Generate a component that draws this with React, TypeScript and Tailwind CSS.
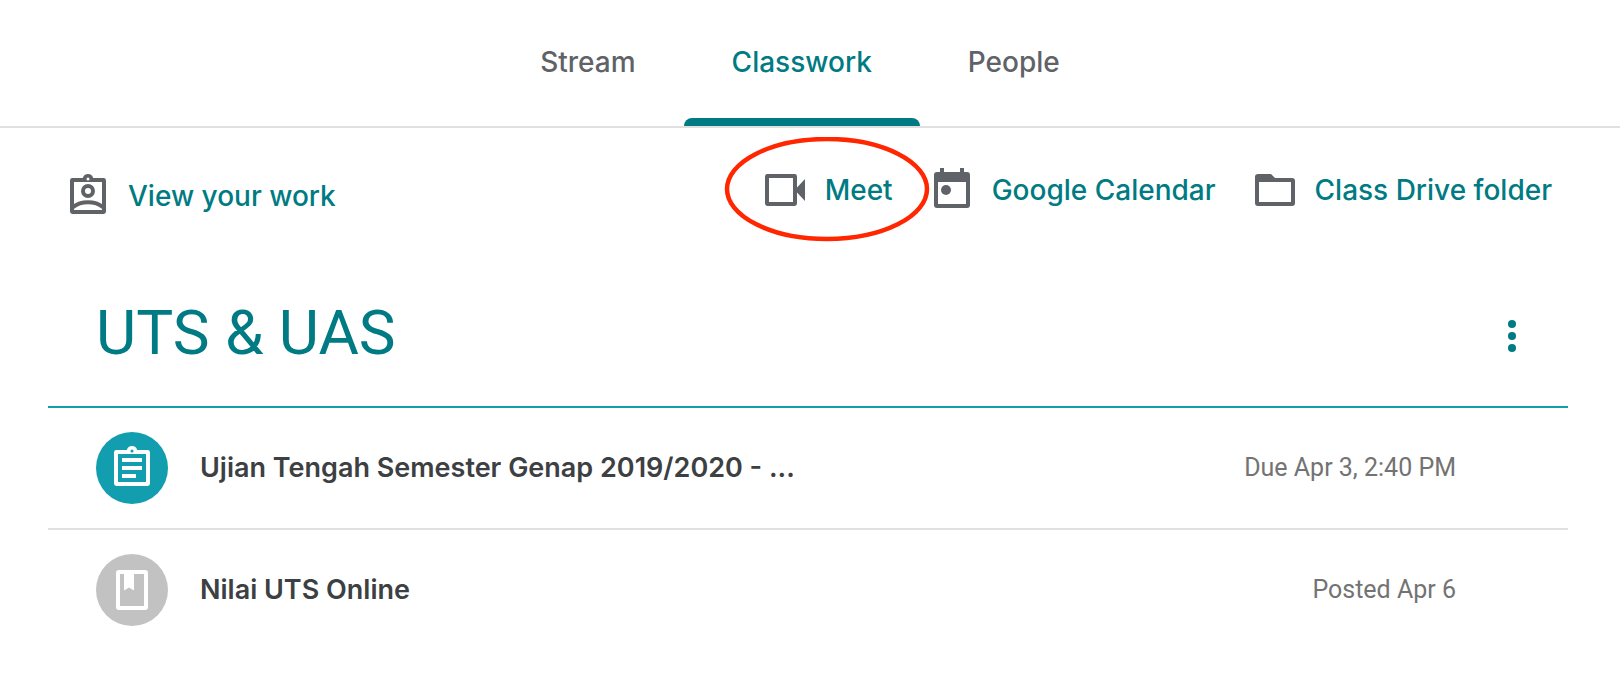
import type { ReactNode } from "react";

interface IconProps {
  className?: string;
  children: ReactNode;
}

function Icon({ className = "", children }: IconProps) {
  return (
    <svg viewBox="0 0 24 24" fill="currentColor" aria-hidden="true" className={`size-12 shrink-0 ${className}`}>
      {children}
    </svg>
  );
}

// Clipboard outline shared by the "your work" and assignment icons
const CLIPBOARD =
  "M4.2 3H9.4A2.7 2.7 0 0 1 14.6 3H19.8A1.2 1.2 0 0 1 21 4.2V19.8A1.2 1.2 0 0 1 19.8 21H4.2A1.2 1.2 0 0 1 3 19.8V4.2A1.2 1.2 0 0 1 4.2 3ZM5 5V19H19V5ZM12 2.75A.75.75 0 1 0 12 4.25A.75.75 0 1 0 12 2.75Z";

function YourWorkIcon() {
  return (
    <Icon className="text-[#5f6368]">
      <path fillRule="evenodd" d={CLIPBOARD} />
      <circle cx="12" cy="9.5" r="2.5" fill="none" stroke="currentColor" strokeWidth="2" />
      <path d="M4.5 17.6C8.5 14.3 15.5 14.3 19.5 17.6" fill="none" stroke="currentColor" strokeWidth="2" />
    </Icon>
  );
}

function MeetIcon() {
  return (
    <Icon className="text-[#5f6368]">
      <path
        fillRule="evenodd"
        d="M3.2 4H16.8A1.2 1.2 0 0 1 18 5.2V10.8L22 6.5V17.5L18 13.2V18.8A1.2 1.2 0 0 1 16.8 20H3.2A1.2 1.2 0 0 1 2 18.8V5.2A1.2 1.2 0 0 1 3.2 4ZM4 6V18H16V6Z"
      />
    </Icon>
  );
}

function CalendarIcon() {
  return (
    <Icon className="text-[#5f6368]">
      <path
        fillRule="evenodd"
        d="M6 1H8V3H16V1H18V3H19.5A1.5 1.5 0 0 1 21 4.5V19.5A1.5 1.5 0 0 1 19.5 21H4.5A1.5 1.5 0 0 1 3 19.5V4.5A1.5 1.5 0 0 1 4.5 3H6ZM5 8V19H19V8Z"
      />
      <circle cx="9" cy="12" r="2.5" />
    </Icon>
  );
}

function FolderIcon() {
  return (
    <Icon className="text-[#5f6368]">
      <path
        fillRule="evenodd"
        d="M3.5 4H10L12 6H20.5A1.5 1.5 0 0 1 22 7.5V18.5A1.5 1.5 0 0 1 20.5 20H3.5A1.5 1.5 0 0 1 2 18.5V5.5A1.5 1.5 0 0 1 3.5 4ZM4 8V18H20V8Z"
      />
    </Icon>
  );
}

function AssignmentIcon() {
  return (
    <Icon>
      <path fillRule="evenodd" d={CLIPBOARD} />
      <path d="M7 7H17V9H7ZM7 11H17V13H7ZM7 15H14V17H7Z" />
    </Icon>
  );
}

function MaterialIcon() {
  return (
    <Icon>
      <path
        fillRule="evenodd"
        d="M5.5 2H18.5A1.5 1.5 0 0 1 20 3.5V20.5A1.5 1.5 0 0 1 18.5 22H5.5A1.5 1.5 0 0 1 4 20.5V3.5A1.5 1.5 0 0 1 5.5 2ZM6 4V20H18V4H13V12.2L10.5 10.7L8 12.2V4Z"
      />
    </Icon>
  );
}

const tabs = [
  { label: "Stream", active: false },
  { label: "Classwork", active: true },
  { label: "People", active: false },
];

const links = [
  { label: "Meet", icon: <MeetIcon />, circled: true },
  { label: "Google Calendar", icon: <CalendarIcon />, circled: false },
  { label: "Class Drive folder", icon: <FolderIcon />, circled: false },
];

const items = [
  {
    title: "Ujian Tengah Semester Genap 2019/2020 - ...",
    date: "Due Apr 3, 2:40 PM",
    icon: <AssignmentIcon />,
    color: "bg-[#129eaf]",
  },
  {
    title: "Nilai UTS Online",
    date: "Posted Apr 6",
    icon: <MaterialIcon />,
    color: "bg-[#c2c2c2]",
  },
];

export default function App() {
  return (
    <div className="min-h-screen bg-white font-[Inter,sans-serif] font-medium">
      <header className="border-b-2 border-[#e0e0e0] pr-5">
        <nav className="flex justify-center">
          {tabs.map((tab) => (
            <a
              key={tab.label}
              href="#"
              aria-current={tab.active ? "page" : undefined}
              className={`flex flex-col px-12 pt-11 text-[28px] leading-9 ${
                tab.active ? "text-[#007b83]" : "text-[#5f6368]"
              }`}
            >
              {tab.label}
              {/* Active indicator */}
              <span className={`-mx-12 mt-[38px] h-2 rounded-t-lg ${tab.active ? "bg-[#007b83]" : ""}`}></span>
            </a>
          ))}
        </nav>
      </header>

      <main className="pl-12 pr-[52px]">
        {/* Toolbar */}
        <div className="flex items-start justify-between px-4 pt-[38px] text-[28px] leading-9 text-[#007b83]">
          <a href="#" className="mt-[6px] flex items-center gap-4">
            <YourWorkIcon />
            View your work
          </a>
          <div className="flex gap-[35px]">
            {links.map((link) => (
              <a key={link.label} href="#" className="relative flex items-center gap-4">
                {link.icon}
                {link.label}
                {link.circled && (
                  <svg
                    viewBox="0 0 206 106"
                    aria-hidden="true"
                    className="pointer-events-none absolute left-1/2 top-1/2 h-[106px] w-[206px] max-w-none -translate-x-1/2 -translate-y-1/2"
                  >
                    <ellipse cx="103" cy="52" rx="100" ry="50" fill="none" stroke="#ff2600" strokeWidth="4.5" />
                  </svg>
                )}
              </a>
            ))}
          </div>
        </div>

        <section className="pt-[68px]">
          {/* Topic header */}
          <div className="flex items-start justify-between border-b-2 border-[#129eaf] pb-7 pl-12 pr-8 text-[#007b83]">
            <h1 className="font-[Roboto,sans-serif] text-[62px] font-normal leading-[90px]">UTS &amp; UAS</h1>
            <button type="button" aria-label="More options" className="mt-6">
              <Icon>
                <circle cx="12" cy="6" r="2" />
                <circle cx="12" cy="12" r="2" />
                <circle cx="12" cy="18" r="2" />
              </Icon>
            </button>
          </div>

          {/* Classwork items */}
          <ul className="divide-y-2 divide-[#e0e0e0]">
            {items.map((item) => (
              <li key={item.title} className="flex items-center py-6 pl-12 pr-28">
                <span className={`flex size-[72px] shrink-0 items-center justify-center rounded-full text-white ${item.color}`}>
                  {item.icon}
                </span>
                <span className="ml-8 flex-1 truncate text-[27px] leading-9 font-semibold text-[#3c4043]">
                  {item.title}
                </span>
                <span className="font-[Roboto,sans-serif] text-[25px] font-normal leading-9 text-[#737373]">
                  {item.date}
                </span>
              </li>
            ))}
          </ul>
        </section>
      </main>
    </div>
  );
}
